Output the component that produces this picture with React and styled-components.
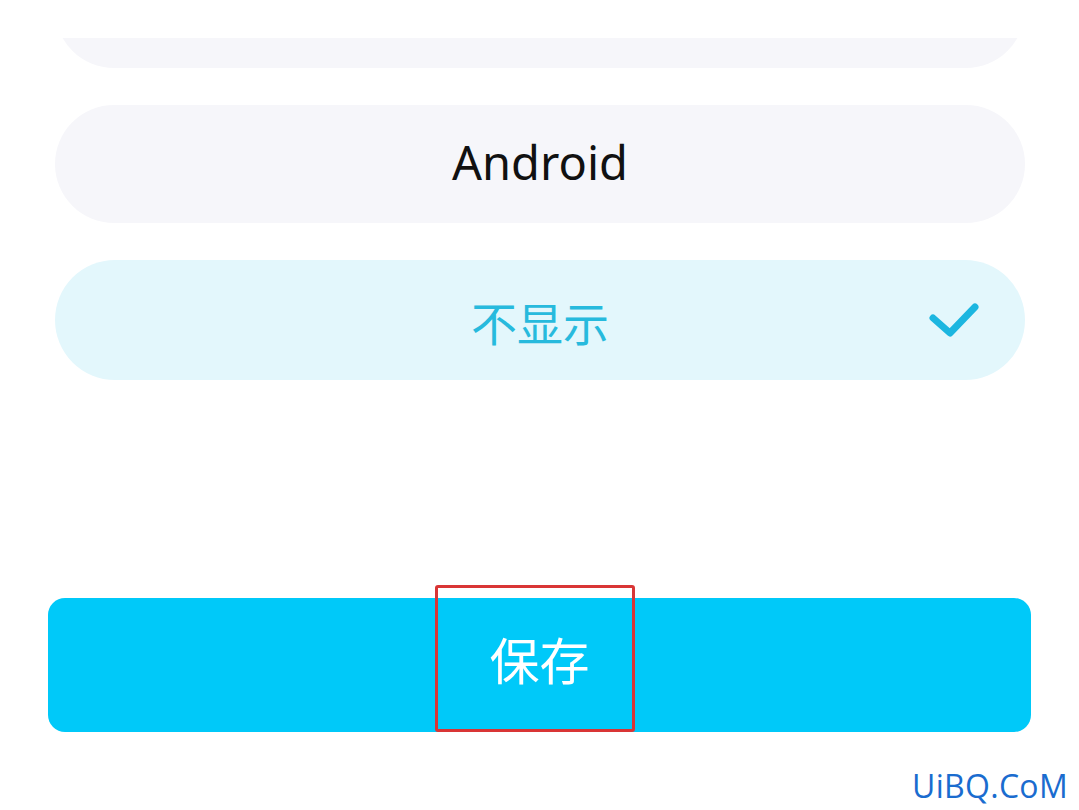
import React from "react";
import styled, { createGlobalStyle } from "styled-components";

const Global = createGlobalStyle`
  html, body {
    margin: 0;
    padding: 0;
    background: #ffffff;
  }
  body {
    width: 1079px;
    height: 810px;
    overflow: hidden;
    font-family: "Noto Sans", "Noto Sans CJK SC", sans-serif;
  }
`;

const Page = styled.div`
  position: relative;
  width: 1079px;
  height: 810px;
  display: flex;
  flex-direction: column;
`;

/* scrolled option list: the first option sits partly above the visible area */
const Viewport = styled.div`
  margin: 38px 0 0 55px;
  width: 970px;
  height: 342px;
  overflow: hidden;
`;

const OptionList = styled.div`
  margin-top: -88px;
  display: flex;
  flex-direction: column;
  gap: 37px;
`;

const Option = styled.div`
  height: ${(p) => (p.$selected ? 120 : 118)}px;
  border-radius: 60px;
  background: ${(p) => (p.$selected ? "#e3f7fc" : "#f6f6fa")};
  display: grid;
  grid-template-columns: 1fr auto 1fr;
  align-items: center;
  padding: 0 46px;
  box-sizing: border-box;
`;

const Label = styled.span`
  grid-column: 2;
  font-family: ${(p) =>
    p.$cjk ? '"Noto Sans CJK SC", sans-serif' : '"Noto Sans", sans-serif'};
  font-size: ${(p) => (p.$cjk ? 46 : 47)}px;
  line-height: 1;
  color: ${(p) => (p.$selected ? "#27badd" : "#111111")};
  margin-top: ${(p) => (p.$cjk ? 2 : -4)}px;
`;

const Check = styled.svg`
  grid-column: 3;
  justify-self: end;
  width: 56px;
  height: 42px;
  margin-top: -2px;
`;

const SaveButton = styled.button`
  position: relative;
  margin: 218px 0 0 48px;
  width: 983px;
  height: 134px;
  border: none;
  border-radius: 17px;
  background: #00c9f9;
  color: #ffffff;
  font-family: "Noto Sans CJK SC", sans-serif;
  font-size: 50px;
  line-height: 1;
  padding: 0 0 14px;
  cursor: pointer;
`;

const Highlight = styled.span`
  position: absolute;
  left: 387px;
  top: -13px;
  width: 200px;
  height: 147px;
  box-sizing: border-box;
  border: 3px solid #d93535;
  border-radius: 3px;
  pointer-events: none;
`;

const Watermark = styled.span`
  position: absolute;
  right: 11px;
  bottom: 8px;
  font-family: "Open Sans", sans-serif;
  font-size: 32px;
  line-height: 1;
  color: #1a6ccf;
  letter-spacing: 0.3px;
`;

const options = [
  { id: "ios", label: "", cjk: false },
  { id: "android", label: "Android", cjk: false },
  { id: "hide", label: "不显示", cjk: true, selected: true },
];

export default function App() {
  return (
    <>
      <Global />
      <Page>
        <Viewport>
          <OptionList>
            {options.map((o) => (
              <Option key={o.id} $selected={o.selected}>
                <Label $cjk={o.cjk} $selected={o.selected}>
                  {o.label}
                </Label>
                {o.selected && (
                  <Check viewBox="0 0 56 42">
                    <path
                      d="M10 20 L27 35 L52 9"
                      fill="none"
                      stroke="#1cb6e0"
                      strokeWidth="7"
                      strokeLinecap="round"
                      strokeLinejoin="round"
                    />
                  </Check>
                )}
              </Option>
            ))}
          </OptionList>
        </Viewport>
        <SaveButton>
          保存
          <Highlight />
        </SaveButton>
        <Watermark>UiBQ.CoM</Watermark>
      </Page>
    </>
  );
}
